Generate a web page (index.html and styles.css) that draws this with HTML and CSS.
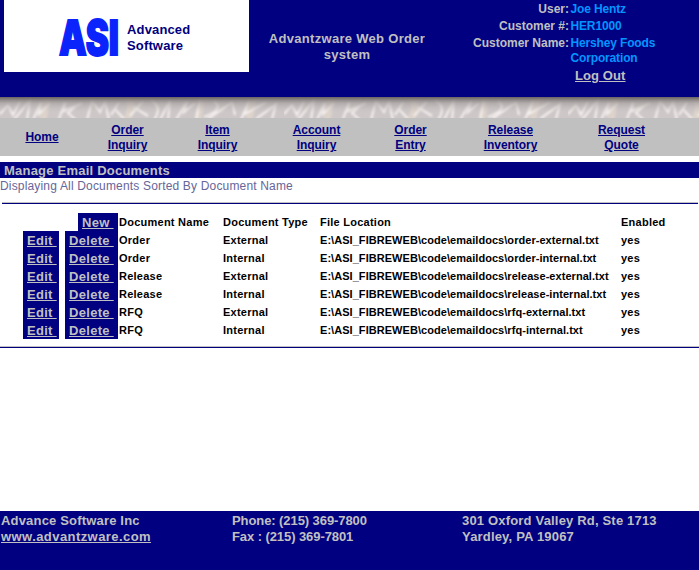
FILE: index.html
```html
<!DOCTYPE html>
<html lang="en">
<head>
<meta charset="utf-8">
<title>Manage Email Documents</title>
<link rel="stylesheet" href="styles.css">
</head>
<body>
<header class="top">
  <div class="logo">
    <svg width="60" height="42" viewBox="0 0 60 42" role="img" aria-label="ASI"><text class="mark" y="37.8" x="1" textLength="60" lengthAdjust="spacingAndGlyphs">ASI</text></svg>
    <div class="brand">Advanced<br>Software</div>
  </div>
  <div class="system">Advantzware Web Order<br>system</div>
  <div class="user">
    <dl>
      <dt>User:</dt><dd>Joe Hentz</dd>
      <dt>Customer #:</dt><dd>HER1000</dd>
      <dt>Customer Name:</dt><dd>Hershey Foods<br>Corporation</dd>
    </dl>
    <a class="logout" href="#">Log Out</a>
  </div>
</header>
<svg class="strip" width="699" height="21" viewBox="0 0 699 21">
  <defs>
    <linearGradient id="shade" x2="0" y2="1"><stop offset="0" stop-color="#686260"/><stop offset=".3" stop-color="#a39d9c" stop-opacity=".65"/><stop offset=".75" stop-color="#c8c1c1" stop-opacity="0"/></linearGradient>
    <filter id="soft" x="-5%" y="-20%" width="110%" height="140%" color-interpolation-filters="sRGB"><feGaussianBlur stdDeviation=".9"/></filter>
    <pattern id="veins" width="284" height="21" patternUnits="userSpaceOnUse">
      <rect width="284" height="21" fill="#cdc7c8"/>
      <g fill="none" filter="url(#soft)">
        <path stroke="#ddd3ca" stroke-width="7" d="M48 -2L43 23M127 -2Q135 10 126 23M202 -2L198 23M254 -2L249 23"/>
        <path stroke="#f3eeec" stroke-width="2.2" d="M0 17L8 8 13 18 20 4M14 23Q24 10 30 3L27 23M33 23L41 5 39 17 50 6M59 22L65 5 64 14 82 6M75 10L68 16 76 23M87 23L92 4 100 15 105 5 109 23M111 18L119 5 115 12 124 22M130 19L143 4M134 10L148 19M151 3Q163 10 154 23M160 23L170 3 168 23M176 23L187 4 184 15 195 6M200 3L196 23M204 20Q225 12 214 4M208 22L232 5 235 18M241 23L249 3 245 17 266 5M256 22L276 7 272 22"/>
      </g>
    </pattern>
  </defs>
  <rect width="699" height="21" fill="url(#veins)"/>
  <rect width="699" height="21" fill="url(#shade)"/>
</svg>
<nav class="nav">
  <a class="home" href="#">Home</a>
  <a href="#">Order<br>Inquiry</a>
  <a href="#">Item<br>Inquiry</a>
  <a href="#">Account<br>Inquiry</a>
  <a href="#">Order<br>Entry</a>
  <a href="#">Release<br>Inventory</a>
  <a href="#">Request<br>Quote</a>
</nav>
<main>
  <h1>Manage Email Documents</h1>
  <p class="note">Displaying All Documents Sorted By Document Name</p>
  <hr class="first">
  <table>
    <colgroup><col class="c-edit"><col class="c-gap"><col class="c-del"><col class="c-name"><col class="c-type"><col class="c-file"><col></colgroup>
    <tr><td></td><td></td><td><a class="btn new" href="#">New&nbsp;</a></td><th>Document Name</th><th>Document Type</th><th>File Location</th><th>Enabled</th></tr>
    <tr><td><a class="btn" href="#">Edit&nbsp;</a></td><td></td><td><a class="btn delete" href="#">Delete&nbsp;</a></td><td>Order</td><td>External</td><td class="file">E:\ASI_FIBREWEB\code\emaildocs\order-external.txt</td><td>yes</td></tr>
    <tr><td><a class="btn" href="#">Edit&nbsp;</a></td><td></td><td><a class="btn delete" href="#">Delete&nbsp;</a></td><td>Order</td><td>Internal</td><td class="file">E:\ASI_FIBREWEB\code\emaildocs\order-internal.txt</td><td>yes</td></tr>
    <tr><td><a class="btn" href="#">Edit&nbsp;</a></td><td></td><td><a class="btn delete" href="#">Delete&nbsp;</a></td><td>Release</td><td>External</td><td class="file">E:\ASI_FIBREWEB\code\emaildocs\release-external.txt</td><td>yes</td></tr>
    <tr><td><a class="btn" href="#">Edit&nbsp;</a></td><td></td><td><a class="btn delete" href="#">Delete&nbsp;</a></td><td>Release</td><td>Internal</td><td class="file">E:\ASI_FIBREWEB\code\emaildocs\release-internal.txt</td><td>yes</td></tr>
    <tr><td><a class="btn" href="#">Edit&nbsp;</a></td><td></td><td><a class="btn delete" href="#">Delete&nbsp;</a></td><td>RFQ</td><td>External</td><td class="file">E:\ASI_FIBREWEB\code\emaildocs\rfq-external.txt</td><td>yes</td></tr>
    <tr><td><a class="btn" href="#">Edit&nbsp;</a></td><td></td><td><a class="btn delete" href="#">Delete&nbsp;</a></td><td>RFQ</td><td>Internal</td><td class="file">E:\ASI_FIBREWEB\code\emaildocs\rfq-internal.txt</td><td>yes</td></tr>
  </table>
  <hr class="second">
</main>
<footer>
  <div>Advance Software Inc<br><a href="#">www.advantzware.com</a></div>
  <div class="phone">Phone: (215) 369-7800<br>Fax : (215) 369-7801</div>
  <div>301 Oxford Valley Rd, Ste 1713<br>Yardley, PA 19067</div>
</footer>
</body>
</html>
```
FILE: styles.css
```css
* { box-sizing: border-box; }
body { margin: 0; height: 570px; overflow: hidden; display: flex; flex-direction: column; background: #fff; font: bold 13px/16px "Liberation Sans", Arial, sans-serif; }
.top { height: 97px; background: #000080; color: #c0c0c0; display: grid; grid-template-columns: 249px 196px 1fr; }
.logo { margin-left: 4px; width: 245px; height: 72px; background: #fff; display: flex; padding: 17px 0 0 54px; }
.logo svg { overflow: visible; }
.mark { font: 900 48px Inter, sans-serif; fill: #0b24fb; stroke: #0b24fb; stroke-width: 1.8; }
.brand { margin: 5px 0 0 9px; color: #000080; letter-spacing: .15px; }
.system { text-align: center; padding-top: 31px; letter-spacing: .3px; }
dl { margin: 0; display: grid; grid-template-columns: 124px 1fr; column-gap: 2px; row-gap: 2px; font-size: 12px; line-height: 15px; padding-top: 2px; }
dt { text-align: right; }
dd { margin: 0 0 0 -.5px; color: #0096ff; letter-spacing: -.15px; }
.logout { color: #c0c0c0; display: block; margin: 2px 0 0 130px; letter-spacing: .1px; }
.strip { display: block; flex: none; }
.nav { height: 38px; background: #c0c0c0; padding: 2px 0 0; display: grid; grid-template-columns: 84px 87px 93px 105px 83px 117px 105px; align-items: center; text-align: center; font-size: 12px; line-height: 15px; }
.nav a { color: #000080; letter-spacing: -.05px; }
.nav .home { margin-bottom: 2px; }
main { margin-top: 6px; flex: 1; }
h1 { margin: 0; height: 16px; font-size: 13px; line-height: 17px; background: #000080; color: #c0c0c0; padding-left: 4px; letter-spacing: .22px; }
.note { margin: 0; height: 16px; font-size: 12px; font-weight: normal; color: #666699; letter-spacing: .17px; }
hr { height: 2px; margin: 0; border: 0; border-top: 1px solid #c0c0c0; background: #000080; }
.first { margin: 8px 1px 9px 2px; }
.second { margin-top: 7px; }
table { margin-left: 23px; width: 670px; table-layout: fixed; border-collapse: collapse; font-size: 11px; line-height: 18px; color: #000; letter-spacing: .25px; }
td, th { padding: 0; height: 18px; text-align: left; white-space: nowrap; vertical-align: top; }
.file { letter-spacing: .05px; }
.c-edit { width: 36px; }
.c-gap { width: 6px; }
.c-del { width: 54px; }
.c-name { width: 104px; }
.c-type { width: 97px; }
.c-file { width: 301px; }
.btn { display: block; width: 36px; height: 18px; padding-left: 4px; background: #000080; color: #c0c0c0; font-size: 13px; line-height: 19px; letter-spacing: .3px; }
.delete { width: 53px; }
.new { width: 40px; margin-left: 13px; }
footer { height: 59px; background: #000080; color: #c0c0c0; display: grid; grid-template-columns: 231px 230px 1fr; padding: 2px 0 0 1px; letter-spacing: .18px; }
footer a { color: inherit; letter-spacing: .43px; }
.phone { letter-spacing: -.08px; }
```
